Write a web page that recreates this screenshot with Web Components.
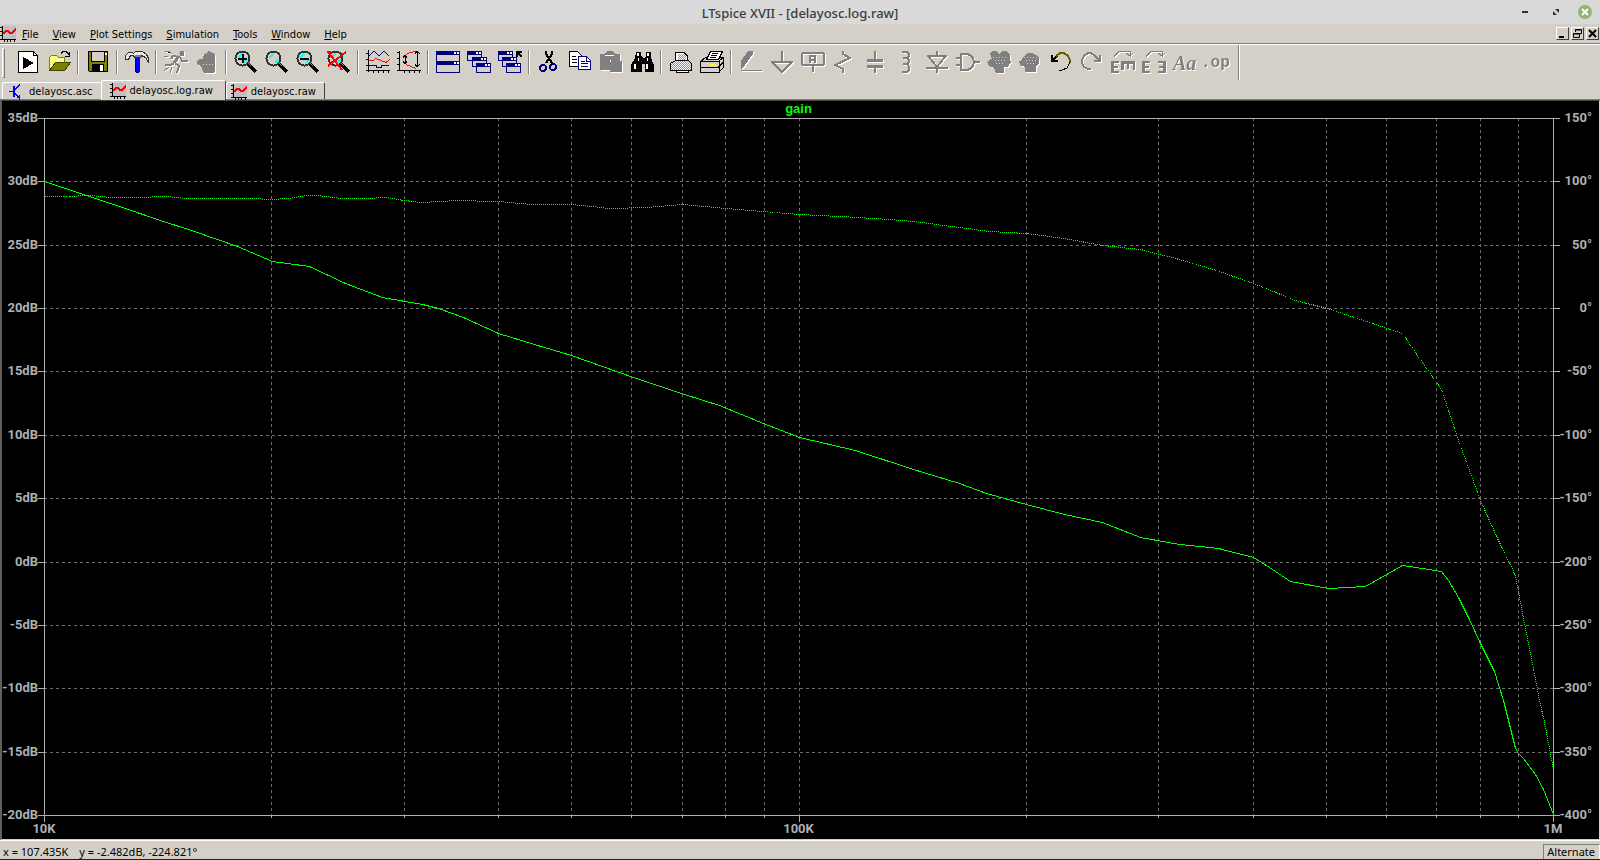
<!DOCTYPE html>
<html lang="en">
<head>
<meta charset="utf-8">
<title>LTspice XVII - [delayosc.log.raw]</title>
<style>
  :root {
    --face: #d4d0c8;
    --shade: #808080;
    --dark: #404040;
    --trace: #00ff00;
    --axis: #b0b0b0;
    --grid: #6c6c6c;
    --font-ui: "DejaVu Sans Condensed", "DejaVu Sans", sans-serif;
    --font-status: "Noto Sans", sans-serif;
    --font-title: "Liberation Sans", Arial, sans-serif;
    --font-axis: Roboto, "Liberation Sans", sans-serif;
  }

  body {
    margin: 0;
    background: var(--face);
    color: #000;
    font: 11px/16px var(--font-ui);
  }
</style>
</head>
<body>
<spice-window>
  <title-bar slot="title">LTspice XVII - [delayosc.log.raw]</title-bar>
  <menu-bar slot="menu">
    <menu-item key="F">File</menu-item>
    <menu-item key="V">View</menu-item>
    <menu-item key="P">Plot Settings</menu-item>
    <menu-item key="S">Simulation</menu-item>
    <menu-item key="T">Tools</menu-item>
    <menu-item key="W">Window</menu-item>
    <menu-item key="H">Help</menu-item>
  </menu-bar>
  <tool-bar slot="tools">
    <tool-group>
      <tool-button icon="run" label="Run"></tool-button>
      <tool-button icon="open" label="Open"></tool-button>
    </tool-group>
    <tool-group><tool-button icon="save" label="Save"></tool-button></tool-group>
    <tool-group><tool-button icon="hammer" label="Control Panel"></tool-button></tool-group>
    <tool-group>
      <tool-button icon="runner" label="Resume" disabled></tool-button>
      <tool-button icon="halt" label="Halt" disabled></tool-button>
    </tool-group>
    <tool-group>
      <tool-button icon="zoomIn" label="Zoom in"></tool-button>
      <tool-button icon="zoom" label="Pan"></tool-button>
      <tool-button icon="zoomOut" label="Zoom out"></tool-button>
      <tool-button icon="zoomFit" label="Zoom full extents"></tool-button>
    </tool-group>
    <tool-group>
      <tool-button icon="traces" label="Pick visible traces"></tool-button>
      <tool-button icon="autorange" label="Autorange"></tool-button>
    </tool-group>
    <tool-group>
      <tool-button icon="tile" label="Tile windows"></tool-button>
      <tool-button icon="cascade" label="Cascade windows"></tool-button>
      <tool-button icon="closeAll" label="Close all windows"></tool-button>
    </tool-group>
    <tool-group>
      <tool-button icon="cut" label="Cut"></tool-button>
      <tool-button icon="copy" label="Copy"></tool-button>
      <tool-button icon="paste" label="Paste" disabled></tool-button>
      <tool-button icon="find" label="Find"></tool-button>
    </tool-group>
    <tool-group>
      <tool-button icon="printSetup" label="Print setup"></tool-button>
      <tool-button icon="print" label="Print"></tool-button>
    </tool-group>
    <tool-group>
      <tool-button icon="wire" label="Wire" disabled></tool-button>
      <tool-button icon="ground" label="Ground" disabled></tool-button>
      <tool-button icon="net" label="Label net" disabled></tool-button>
      <tool-button icon="resistor" label="Resistor" disabled></tool-button>
      <tool-button icon="capacitor" label="Capacitor" disabled></tool-button>
      <tool-button icon="inductor" label="Inductor" disabled></tool-button>
      <tool-button icon="diode" label="Diode" disabled></tool-button>
      <tool-button icon="gate" label="Component" disabled></tool-button>
      <tool-button icon="move" label="Move" disabled></tool-button>
      <tool-button icon="drag" label="Drag" disabled></tool-button>
      <tool-button icon="undo" label="Undo"></tool-button>
      <tool-button icon="redo" label="Redo" disabled></tool-button>
      <tool-button icon="rotate" label="Rotate" disabled></tool-button>
      <tool-button icon="mirror" label="Mirror" disabled></tool-button>
      <tool-button icon="text" label="Text" disabled></tool-button>
      <tool-button icon="op" label="SPICE directive" disabled></tool-button>
    </tool-group>
  </tool-bar>
  <tab-strip slot="tabs">
    <doc-tab icon="schematic">delayosc.asc</doc-tab>
    <doc-tab icon="plot" active>delayosc.log.raw</doc-tab>
    <doc-tab icon="plot">delayosc.raw</doc-tab>
  </tab-strip>
  <bode-plot>gain</bode-plot>
  <status-bar slot="status">
    <span>x = 107.435K</span>
    <span>y = -2.482dB, -224.821°</span>
    <span slot="mode">Alternate</span>
  </status-bar>
</spice-window>

<script>
(() => {
  const define = (name, html, setup) => {
    const template = document.createElement("template");
    template.innerHTML = html;
    customElements.define(name, class extends HTMLElement {
      connectedCallback() {
        if (this.shadowRoot) return;
        this.attachShadow({ mode: "open" }).append(template.content.cloneNode(true));
        if (setup) setup(this, this.shadowRoot);
      }
    });
  };

  /* 16px document icons */
  const docIcons = {
    plot: `<path fill="#c0c0c0" d="M1 0h15v13H1z"/><path d="M2 0h1v13h13v1H2zM0 1h2v1H0zM0 5h2v1H0zM0 9h2v1H0zM0 13h2v1H0zM4 14h1v2H4zM7 14h1v2H7zM10 14h1v2h-1zM14 14h1v2h-1z"/>
      <path fill="none" stroke="#f00" stroke-width="2" d="M3 8l3-3h2l2 2h2l4-4"/>`,
    schematic: `<path fill="none" stroke="#00f" d="M0 7.5h5M10.5 0v1l-5 5M5.5 9l5 5v2"/><path fill="#00f" d="M4 2h2v11H4zM7 14h4v-3z"/>`
  };

  const lens = `<circle cx="8.5" cy="8.5" r="7" fill="#d4d0c8" stroke="#303030" stroke-width="2"/>
    <path fill="none" stroke="#0ff" stroke-width="2" d="M4 8l4-4M10 13l3-3"/>
    <path stroke="#000" stroke-width="4" d="M14 14l8 8"/><path stroke="#808080" d="M14 13l3 3"/>`;
  const pane = (x, y) => `<path fill="#d4d0c8" stroke="#000080" d="M${x}.5 ${y}.5h14v9h-14z"/><path fill="#000080" d="M${x} ${y}h15v4H${x}z"/><path fill="#fff" d="M${x + 9} ${y + 1}h2v2h-2zM${x + 12} ${y + 1}h2v2h-2z"/>`;
  const dots = `<path stroke="#d4d0c8" stroke-dasharray="1 2" d="M6 7.5h14M8 10.5h12M9 13.5h8"/>`;

  /* 24px toolbar icons; disabled ones draw in the current colour */
  const toolIcons = {
    run: `<path fill="#fff" stroke="#000" d="M2.5 1.5h15l4 4v17h-19z"/><path fill="none" stroke="#000" d="M17.5 1.5v4h4"/><path d="M7 7l11 6-11 6z"/>`,
    open: `<path fill="#ffff80" stroke="#808000" d="M2.5 20V7.5l2-2h5l2 2h6V13"/><path fill="#808000" stroke="#404000" d="M2.5 20.5l6-8h15l-6 8z"/><path fill="none" stroke="#000" d="M14 3.5l2-2h3l3 3v2M18 6.5h5M22.5 2v4"/>`,
    save: `<path fill="#808000" stroke="#000" d="M2.5 1.5h19v20h-18l-1-1z"/><path fill="#d4d0c8" stroke="#000" d="M5.5 1.5h13v10h-13z"/><path d="M6 14h12v8H6z"/><path fill="#fff" d="M14 15h3v6h-3zM19 3h2v2h-2z"/>`,
    hammer: `<path fill="#00f" d="M10 8h5v14h-5z"/><path fill="#000080" d="M10 8h1v14h-1zM11 22h3v1h-3z"/>
      <path fill="#e8e8e8" stroke="#303030" d="M.5 5.5l3-3h4l1 1 2-2h7l4 3 2 4v4l-3-5-4-2-1 2h-6l-1-2h-3l-2 4h-3z"/><path fill="#808080" d="M10 5h6v2h-6z"/>`,
    runner: `<circle cx="18" cy="3.5" r="2.5" fill="currentColor"/><path fill="none" stroke="currentColor" stroke-width="3" d="M15 6l-5 7"/><path fill="none" stroke="currentColor" stroke-width="2" d="M10 13l-3 2H1M11 13l4 3-2 7M16 7l2 4h6M15 7L9 6 7 9"/><path stroke="currentColor" d="M1 1h4l3 3M0 6h4M5 17l-5 4M8 17l-2 6"/>`,
    halt: `<path fill="currentColor" d="M8 7l2-4 2 1 1-3 3 1 2 1 2 2v16l-2 2H9l-3-7-4-2v-3l2-2h4z"/><path stroke="#d4d0c8" stroke-dasharray="1 2" d="M8 14.5h12"/>`,
    zoomIn: `${lens}<path fill="#000" d="M4 8h9v2H4zM8 4h2v9H8z"/>`,
    zoom: lens,
    zoomOut: `${lens}<path fill="#000" d="M4 8h9v2H4z"/>`,
    zoomFit: `${lens}<path fill="none" stroke="#f00" stroke-width="2" d="M0 2h4M1 2l14 18M19 2L1 16M5 11l-3 5"/>`,
    traces: `<path fill="none" stroke="#000" d="M2.5 0v22M0 20.5h24M0 3.5h2M0 9.5h2M0 15.5h2M7.5 20v3M12.5 20v3M17.5 20v3M22.5 20v3"/><path fill="none" stroke="#000080" d="M3 6l5-5 5 5 5-5 5 5"/><path fill="none" stroke="#f00" d="M3 10.5h4l3-2 5 2 5 2 4-3"/><path fill="none" stroke="#000080" d="M3 15.5h7v2h5v-2h8"/>`,
    autorange: `<path fill="none" stroke="#000" d="M2.5 1v20M0 20.5h24M0 2.5h2M0 8.5h2M0 14.5h2M7.5 20v3M12.5 20v3M17.5 20v3M22.5 20v3M8.5 6v7M6 7.5l2-2 2 2M6 11.5l2 2 2-2M20.5 1v16M18 4l2-3 3 3M18 14l2 3 3-3"/><path fill="none" stroke="#f00" d="M9 4.5l4-2 6-1M9 14.5l5 2 5 2"/>`,
    tile: `<path fill="#d4d0c8" stroke="#000080" d="M.5 1.5h23v21H.5z"/><path fill="#000080" d="M0 1h24v4H0zM0 11h24v4H0z"/><path fill="#fff" d="M18 2h2v2h-2zM21 2h2v2h-2zM18 12h2v2h-2zM21 12h2v2h-2z"/>`,
    cascade: pane(0, 1) + pane(5, 7) + pane(9, 13),
    closeAll: pane(0, 1) + pane(4, 7) + pane(8, 13) + `<path fill="#d4d0c8" d="M16 0h8v7h-8z"/><path fill="none" stroke="#000" stroke-width="2" d="M19 7V2h5M19 2l5 5"/>`,
    cut: `<path stroke="#000" stroke-width="2" fill="none" d="M9 1v3l6 9M15 1v3L9 13"/><circle cx="6" cy="18" r="3" fill="none" stroke="#000080" stroke-width="2"/><circle cx="16" cy="17" r="3" fill="none" stroke="#000080" stroke-width="2"/>`,
    copy: `<path fill="#fff" stroke="#000" d="M1.5 1.5h8l4 4v11h-12z"/><path fill="#fff" stroke="#000080" d="M10.5 6.5h8l4 4v9h-12z"/><path stroke="#000" d="M4 6.5h4M4 9.5h5M4 12.5h5"/><path fill="none" stroke="#000080" d="M18.5 6v5h4M13 11.5h4M13 13.5h7M13 16.5h7"/>`,
    paste: `<path fill="currentColor" d="M1 4h5l2-3h6l2 3h5v7h2v11H11v-2H1z"/><path stroke="#fff" d="M6 5.5h9M11.5 10v2"/>`,
    find: `<path d="M6 2h5v4l2 2h1l2-2V2h5v6l3 7v7h-9v-8h-3v8H1v-7l4-7z"/><path fill="#fff" d="M7 3h2v3H7zM17 3h2v3h-2zM4 14h2v5H4zM16 14h2v5h-2zM8 8h1v3H8zM17 8h1v3h-1z"/>`,
    printSetup: `<defs><pattern id="d" width="2" height="2" patternUnits="userSpaceOnUse"><path fill="#fff" d="M0 0h2v2H0z"/><path fill="#909090" d="M0 0h1v1H0zM1 1h1v1H1z"/></pattern></defs><path fill="#fff" stroke="#000" d="M6.5 11v-9h8l4 4v5"/><path fill="url(#d)" stroke="#000" d="M1.5 20.5v-7l5-3h13l3 3v7z"/><path fill="#fff" stroke="#000" d="M7.5 20.5h12v2h-12z"/><path fill="url(#d)" d="M9 4h5l3 3v3H9z"/>`,
    print: `<path fill="#d4d0c8" stroke="#000" d="M.5 22.5v-11l5-4h18v10l-5 5z"/><path fill="none" stroke="#000" d="M0 11.5h19v11M0 17.5h18l5-5M19 11l4-3"/><path fill="#fff" stroke="#000" d="M6.5 9.5l4-8h12l-4 8z"/><path stroke="#000" d="M12 3.5h6M11 5.5h6M10 7.5h6"/><path fill="#ff0" d="M10 14h6v2h-6z"/>`,
    wire: `<path fill="currentColor" d="M9 1h5v3L6 15l-4 4v-8zM2 20h21v1H2z"/>`,
    ground: `<path fill="none" stroke="currentColor" stroke-width="2" d="M12 1v10M1 12h22M3 13l9 9 9-9"/>`,
    net: `<rect x="1" y="3" width="22" height="12" rx="2" fill="none" stroke="currentColor" stroke-width="2"/><path fill="none" stroke="currentColor" stroke-width="2" d="M12 15v7M9 13V6h5v7M9 10h5"/>`,
    resistor: `<path fill="none" stroke="currentColor" stroke-width="2" d="M11 1v3l7 4L3 15l8 4v4"/>`,
    capacitor: `<path fill="currentColor" d="M11 1h2v8h7v3H4V9h7zM4 15h16v3h-7v5h-2v-5H4z"/>`,
    inductor: `<path fill="none" stroke="currentColor" stroke-width="2" d="M8 2h3q4 0 4 3t-4 3H9h2q4 0 4 3t-4 3H9h2q4 0 4 4t-4 4H8"/>`,
    diode: `<path fill="none" stroke="currentColor" stroke-width="2" d="M12 1v5M2 6h20M4 7l8 10 8-10M1 18h22M12 17v6"/>`,
    gate: `<path fill="none" stroke="currentColor" stroke-width="2" d="M5 4h6c9 2 9 14 0 16H5zM0 8h5M0 15h5M18 12h6"/>`,
    move: `<path fill="currentColor" d="M3 3l2-2h4l3 3 4-3h4l3 4v4l1 3-3 5h-4v6H9l-2-5-5-2-2-4 3-3h2z"/>${dots}`,
    drag: `<path fill="currentColor" d="M5 7l2-2 3-2h4l4 2 3 3v5l-3 4v5H7v-5l-5-2-1-4 3-1z"/>${dots}`,
    undo: `<path fill="none" stroke="#000" stroke-width="2" d="M3 5v6h6M3 11l5-5"/><path fill="none" stroke="#606000" stroke-width="2" d="M7 6l4-3h4l4 3 2 4v3"/><path fill="none" stroke="#000" d="M21 12l-3 6-5 2h-3"/>`,
    redo: `<path fill="none" stroke="currentColor" stroke-width="2" d="M20 5v6h-6M20 11l-5-5-4-3H8L4 6l-2 4v3l2 4 4 2h3"/>`,
    rotate: `<path fill="none" stroke="currentColor" d="M3 6.5l5-5h11v5M15 3l4 3 3-3"/><path fill="currentColor" d="M0 11h8v2H3v3h4v2H3v3h5v2H0zM10 11h14v9h-2v-6h-4v5h-2v-5h-3v6h-3z"/>`,
    mirror: `<path fill="none" stroke="currentColor" d="M4 6.5l5-5h11v5M16 3l4 3 3-3"/><path fill="currentColor" d="M0 11h8v2H3v3h4v2H3v3h5v2H0zM16 11h8v12h-8v-2h5v-3h-4v-2h4v-3h-5z"/>`,
    text: `<text x="0" y="20" font-family="Liberation Serif" font-size="20" font-style="italic" font-weight="700" fill="currentColor">Aa</text>`,
    op: `<text x="-3" y="17" font-family="Liberation Mono" font-size="16" font-weight="700" fill="currentColor">.op</text>`
  };

  define("spice-window", `
    <style>
      :host { display: flex; flex-direction: column; height: 100vh; box-sizing: border-box; border-bottom: 1px solid #202020; }
      main { flex: 1; min-height: 0; display: flex; border: solid; border-width: 1px 1px 1px 2px; border-color: var(--dark) var(--face) var(--face) #606060; }
      ::slotted(bode-plot) { flex: 1; }
    </style>
    <slot name="title"></slot>
    <slot name="menu"></slot>
    <slot name="tools"></slot>
    <slot name="tabs"></slot>
    <main><slot></slot></main>
    <slot name="status"></slot>`);

  define("title-bar", `
    <style>
      :host { display: grid; grid-template-columns: 1fr auto 1fr; align-items: center; height: 24px; background: #d9d9d9; color: #3c3c3c; }
      h1 { grid-column: 2; margin: 0; padding-top: 2px; font: 500 13px/22px "Noto Sans", sans-serif; }
      nav { display: flex; justify-content: flex-end; gap: 16px; padding-right: 8px; }
      button { width: 14px; height: 14px; padding: 0; border: 0; background: none; }
      svg { display: block; }
    </style>
    <h1><slot></slot></h1>
    <nav>
      <button aria-label="Minimize"><svg width="14" height="14"><path fill="#333" d="M4 6h6v2H4z"/></svg></button>
      <button aria-label="Restore"><svg width="14" height="14"><path fill="#333" d="M7 4h4v4zM5 6l4 4H5z"/></svg></button>
      <button aria-label="Close"><svg width="14" height="14"><circle cx="7" cy="7" r="7" fill="#92b372"/><path stroke="#fff" stroke-width="2" d="M4 4l6 6M10 4l-6 6"/></svg></button>
    </nav>`);

  define("menu-bar", `
    <style>
      :host { display: flex; align-items: center; height: 19px; border-bottom: 1px solid var(--shade); }
      svg { width: 16px; height: 16px; }
      nav { display: flex; flex: 1; padding-top: 3px; }
      .mdi { display: flex; gap: 2px; padding-right: 1px; }
      .mdi button { width: 13px; height: 13px; padding: 0; border: 1px solid; border-color: #fff var(--dark) var(--dark) #fff; background: var(--face); }
      .mdi svg { display: block; width: 11px; height: 11px; }
    </style>
    <svg viewBox="0 0 16 16" shape-rendering="crispEdges">${docIcons.plot}</svg>
    <nav><slot></slot></nav>
    <div class="mdi">
      <button aria-label="Minimize document"><svg><path d="M2 8h5v2H2z"/></svg></button>
      <button aria-label="Restore document"><svg><path fill="none" stroke="#000" d="M3.5 4V1.5h6v4H8M1.5 5.5h6v4h-6zM3 2h7M1 6h7"/></svg></button>
      <button aria-label="Close document"><svg><path stroke="#000" stroke-width="2" d="M2 2l7 7M9 2L2 9"/></svg></button>
    </div>`);

  define("menu-item", `
    <style>
      :host { display: block; }
      button { display: block; padding: 0 7px 0 6px; border: 0; background: none; color: inherit; font: inherit; }
      button::first-letter { text-decoration: underline; }
      :host(:not(:first-of-type)) button { padding-left: 7px; }
    </style>
    <button><slot></slot></button>`, (host, root) => {
      root.querySelector("button").accessKey = host.getAttribute("key");
    });

  define("tool-bar", `
    <style>
      :host { display: flex; height: 34px; border-top: 1px solid #fff; }
      .grip { width: 1px; height: 28px; margin: 3px 7px 0 2px; border: solid; border-width: 1px; border-color: #fff var(--shade) var(--shade) #fff; }
      .end { width: 1px; height: 35px; background: var(--shade); border-right: 1px solid #fff; }
    </style>
    <div class="grip"></div>
    <slot></slot>
    <div class="end"></div>`);

  define("tool-group", `
    <style>
      :host { display: flex; align-items: center; }
      :host::after { content: ""; width: 1px; height: 24px; margin: 0 3px; background: var(--shade); border-right: 1px solid #fff; }
      :host(:last-of-type)::after { visibility: hidden; margin-right: 2px; }
    </style>
    <slot></slot>`);

  define("tool-button", `
    <style>
      :host { display: block; }
      button { display: grid; place-items: center; width: 31px; height: 26px; padding: 0 3px 0 4px; border: 0; background: none; color: var(--shade); }
      svg { width: 24px; height: 24px; overflow: visible; }
      button:disabled svg { filter: drop-shadow(1px 1px 0 #fff); }
    </style>
    <button></button>`, (host, root) => {
      const button = root.querySelector("button");
      button.disabled = host.hasAttribute("disabled");
      button.setAttribute("aria-label", host.getAttribute("label"));
      button.innerHTML = `<svg viewBox="0 0 24 24" shape-rendering="crispEdges" aria-hidden="true">${toolIcons[host.getAttribute("icon")]}</svg>`;
    });

  define("tab-strip", `
    <style>
      :host { display: flex; align-items: flex-end; height: 20px; padding-left: 2px; border-bottom: 1px solid var(--shade); }
    </style>
    <slot></slot>`);

  define("doc-tab", `
    <style>
      :host { display: block; }
      button { display: flex; align-items: center; gap: 4px; height: 17px; padding: 2px 8px 0 4px; border: solid; border-width: 1px 0 0 1px; border-color: #fff; border-radius: 3px 2px 0 0; background: var(--face); color: inherit; font: inherit; }
      svg { width: 16px; height: 16px; }
      :host(:first-of-type) button { padding-left: 6px; }
      :host(:last-of-type) button { border-right: 1px solid var(--dark); }
      :host([active]) button { height: 20px; margin-bottom: -1px; padding: 0 12px 0 8px; border-right: 1px solid var(--dark); }
    </style>
    <button role="tab"><svg viewBox="0 0 16 16" shape-rendering="crispEdges"></svg><slot></slot></button>`, (host, root) => {
      root.querySelector("svg").innerHTML = docIcons[host.getAttribute("icon")];
      root.querySelector("button").setAttribute("aria-selected", host.hasAttribute("active"));
    });

  /* traces in plot units: 1509 across two decades, 697 down eleven divisions */
  const gain = [[0,63],[45,78],[78,89],[116,102],[150,113],[193,128],[228,143],[265,148],[301,165],[338,179],[378,186],[394,190],[419,199],[454,215],[490,226],[527,237],[589,259],[640,276],[675,287],[719,305],[755,319],[811,332],[869,351],[915,365],[942,375],[982,386],[1020,396],[1058,404],[1096,419],[1135,426],[1156,428],[1174,430],[1209,439],[1225,449],[1246,463],[1284,470],[1321,468],[1358,447],[1378,450],[1397,453],[1404,462],[1414,479],[1425,501],[1436,525],[1450,553],[1459,582],[1465,606],[1471,630],[1474,635],[1479,640],[1491,656],[1499,671],[1509,696]];
  const phase = [[0,78],[20,78],[45,77],[66,79],[93,79],[122,78],[143,80],[206,80],[226,81],[244,80],[263,77],[272,77],[298,80],[320,80],[342,79],[360,82],[376,84],[396,83],[411,82],[454,83],[487,86],[528,86],[565,90],[602,89],[639,86],[681,90],[755,96],[796,98],[846,101],[869,103],[945,113],[982,115],[1020,120],[1058,127],[1096,131],[1135,141],[1172,152],[1209,165],[1251,182],[1283,190],[1358,215],[1378,244],[1397,271],[1414,322],[1436,382],[1454,422],[1471,457],[1479,500],[1487,540],[1495,582],[1500,604],[1505,630],[1509,652]];

  define("bode-plot", `
    <style>
      :host { display: grid; grid-template: 9px 1fr auto / 42px 1fr 46px; padding-bottom: 2px; background: #000; color: var(--axis); font: 700 13px/16px var(--font-axis); }
      h2 { grid-column: 2; margin: 0; color: var(--trace); font: 700 13px/16px var(--font-title); text-align: center; }
      ol { display: flex; flex-direction: column; justify-content: space-between; margin: 0; padding: 0; list-style: none; text-align: right; }
      .db { grid-area: 2 / 1; padding-right: 6px; }
      .deg { grid-area: 2 / 3; padding-right: 7px; }
      .area { grid-area: 2 / 2; padding: 8px 0; display: flex; min-height: 0; min-width: 0; }
      svg { flex: 1; width: 0; height: auto; min-height: 0; overflow: visible; }
      path, polyline { fill: none; vector-effect: non-scaling-stroke; }
      .grid { stroke: var(--grid); stroke-dasharray: 3 3; }
      .axis { stroke: var(--axis); }
      polyline { stroke: var(--trace); }
      .phase { stroke-dasharray: 1 1; }
      .freq { grid-area: 3 / 2; flex-direction: row; margin: -2px -20px 0; }
      .freq li { width: 40px; text-align: center; }
    </style>
    <h2><slot></slot></h2>
    <ol class="db"></ol>
    <div class="area"><svg viewBox="0 0 1509 697" preserveAspectRatio="none" shape-rendering="crispEdges">
      <path class="grid"/><path class="axis"/>
      <polyline class="phase"/><polyline class="gain"/>
    </svg></div>
    <ol class="deg"></ol>
    <ol class="freq"><li>10K</li><li>100K</li><li>1M</li></ol>`, (host, root) => {
      const rows = Array.from({ length: 12 }, (_, i) => i);
      root.querySelector(".db").innerHTML = rows.map(i => `<li>${35 - 5 * i}dB</li>`).join("");
      root.querySelector(".deg").innerHTML = rows.map(i => `<li>${150 - 50 * i}°</li>`).join("");

      let grid = "";
      let axis = "M0.5 0V704M1509.5 0V704";
      for (const i of rows) {
        const y = Math.round(i * 697 / 11) + 0.5;
        if (i > 0 && i < 11) grid += `M0 ${y}H1509`;
        axis += i % 11 ? `M-6 ${y}H0M1509 ${y}H1516` : `M-6 ${y}H1516`;
      }
      for (let k = 2; k < 19; k++) {
        const f = k < 10 ? k : (k - 9) * 10;
        const x = Math.round(1509 / 2 * Math.log10(f)) + 0.5;
        grid += `M${x} 0V697`;
        axis += `M${x} 697V${f === 10 ? 704 : 700}`;
      }
      root.querySelector(".grid").setAttribute("d", grid);
      root.querySelector(".axis").setAttribute("d", axis);
      const place = points => points.map(([x, y]) => `${x + 0.5},${y + 0.5}`).join(" ");
      root.querySelector(".gain").setAttribute("points", place(gain));
      root.querySelector(".phase").setAttribute("points", place(phase));
    });

  define("status-bar", `
    <style>
      :host { display: flex; align-items: flex-end; justify-content: space-between; height: 18px; border-top: 1px solid #fff; font-family: var(--font-status); }
      .readout { display: flex; gap: 11px; padding-left: 3px; line-height: 14px; }
      .mode { padding: 0 4px 0 3px; border: solid; border-width: 1px 1px 0 1px; border-color: var(--shade) #fff #fff var(--shade); line-height: 14px; }
    </style>
    <div class="readout"><slot></slot></div>
    <div class="mode"><slot name="mode"></slot></div>`);
})();
</script>
</body>
</html>
